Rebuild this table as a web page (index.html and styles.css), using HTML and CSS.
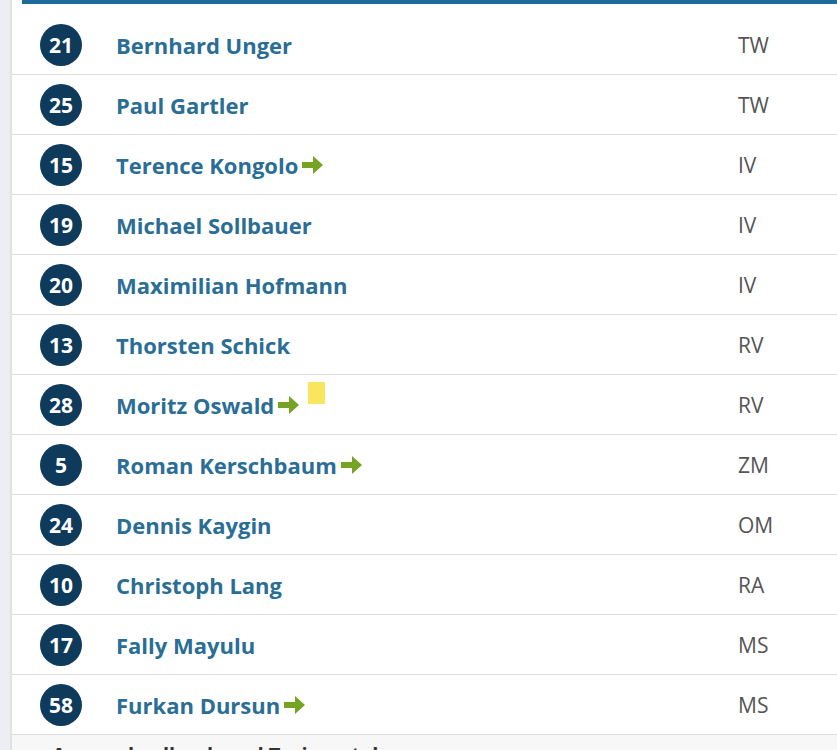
FILE: index.html
```html
<!DOCTYPE html>
<html lang="de">
<head>
<meta charset="utf-8">
<title>Kader</title>
<link rel="stylesheet" href="styles.css">
</head>
<body>
<div class="page">
  <div class="sidebar"></div>
  <div class="main">
    <div class="topbar"></div>
    <div class="squad">
      <div class="row"><span class="num">21</span><span class="name"><a>Bernhard Unger</a></span><span class="pos">TW</span></div>
      <div class="row"><span class="num">25</span><span class="name"><a>Paul Gartler</a></span><span class="pos">TW</span></div>
      <div class="row"><span class="num">15</span><span class="name"><a>Terence Kongolo</a><svg class="arrow" viewBox="0 0 21 18"><path d="M0 6h11V0l10 9-10 9v-6H0z"/></svg></span><span class="pos">IV</span></div>
      <div class="row"><span class="num">19</span><span class="name"><a>Michael Sollbauer</a></span><span class="pos">IV</span></div>
      <div class="row"><span class="num">20</span><span class="name"><a>Maximilian Hofmann</a></span><span class="pos">IV</span></div>
      <div class="row"><span class="num">13</span><span class="name"><a>Thorsten Schick</a></span><span class="pos">RV</span></div>
      <div class="row"><span class="num">28</span><span class="name"><a>Moritz Oswald</a><svg class="arrow" viewBox="0 0 21 18"><path d="M0 6h11V0l10 9-10 9v-6H0z"/></svg><span class="card"></span></span><span class="pos">RV</span></div>
      <div class="row"><span class="num">5</span><span class="name"><a>Roman Kerschbaum</a><svg class="arrow" viewBox="0 0 21 18"><path d="M0 6h11V0l10 9-10 9v-6H0z"/></svg></span><span class="pos">ZM</span></div>
      <div class="row"><span class="num">24</span><span class="name"><a>Dennis Kaygin</a></span><span class="pos">OM</span></div>
      <div class="row"><span class="num">10</span><span class="name"><a>Christoph Lang</a></span><span class="pos">RA</span></div>
      <div class="row"><span class="num">17</span><span class="name"><a>Fally Mayulu</a></span><span class="pos">MS</span></div>
      <div class="row"><span class="num">58</span><span class="name"><a>Furkan Dursun</a><svg class="arrow" viewBox="0 0 21 18"><path d="M0 6h11V0l10 9-10 9v-6H0z"/></svg></span><span class="pos">MS</span></div>
    </div>
    <div class="footer"><span class="foot-text">Auswechselbank und Trainerstab</span></div>
  </div>
</div>
</body>
</html>
```

FILE: styles.css
```css
html, body {
  margin: 0;
  padding: 0;
  background: #ffffff;
  height: 750px;
  overflow: hidden;
}

.page {
  display: flex;
  height: 750px;
  font-family: "Open Sans", "Lato", sans-serif;
}

.sidebar {
  width: 10px;
  flex: none;
  background: #eceef1;
  border-right: 2px solid #dfe1e4;
}

.main {
  flex: 1;
  display: flex;
  flex-direction: column;
}

.topbar {
  flex: none;
  height: 4px;
  margin-left: 10px;
  background: #1d6b9b;
  margin-bottom: 11px;
}

.squad {
  flex: none;
}

.row {
  display: flex;
  align-items: center;
  height: 59px;
  border-bottom: 1px solid #dedede;
}

.num {
  flex: none;
  width: 42px;
  height: 42px;
  margin-left: 28px;
  border-radius: 50%;
  background: #0e3a5c;
  color: #ffffff;
  font-weight: 700;
  font-size: 21px;
  display: flex;
  align-items: center;
  justify-content: center;
}

.name {
  flex: 1;
  display: flex;
  align-items: center;
  margin-left: 34px;
  align-self: stretch;
}

.name a {
  color: #2a6e96;
  font-weight: 700;
  font-size: 22px;
}

.arrow {
  width: 21px;
  height: 18px;
  margin-left: 4px;
  fill: #75a323;
}

.card {
  width: 17px;
  height: 22px;
  background: #f9e65c;
  margin-left: 9px;
  align-self: flex-start;
  margin-top: 7px;
}

.pos {
  flex: none;
  width: 99px;
  color: #555555;
  font-size: 21px;
}

.footer {
  flex: 1;
  background: #f7f7f7;
  padding-left: 40px;
  padding-top: 8px;
}

.foot-text {
  color: #333333;
  font-weight: 700;
  font-size: 20px;
  line-height: 24px;
}
```
